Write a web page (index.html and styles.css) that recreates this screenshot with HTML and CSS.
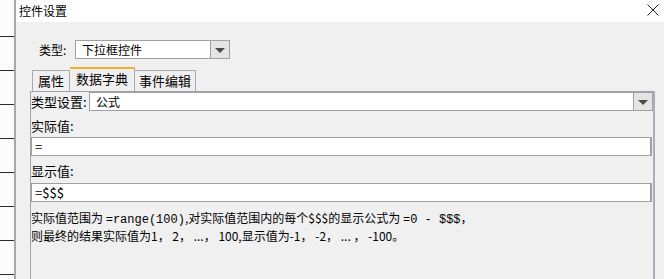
FILE: index.html
```html
<!DOCTYPE html>
<html lang="zh-CN">
<head>
    <meta charset="UTF-8">
    <title>控件设置</title>
    <link rel="stylesheet" href="styles.css">
</head>
<body>
    <div class="behind">
        <div class="line"></div>
        <div class="line"></div>
        <div class="line"></div>
        <div class="line"></div>
        <div class="line"></div>
        <div class="line"></div>
        <div class="line"></div>
        <div class="line"></div>
    </div>
    <div class="dialog">
        <div class="titlebar">
            <span class="title">控件设置</span>
            <svg class="close" width="12" height="12" viewBox="0 0 12 12">
                <path d="M0.5 0.5 L11.5 11.5 M11.5 0.5 L0.5 11.5" stroke="#222" stroke-width="1" fill="none"/>
            </svg>
        </div>
        <div class="content">
            <div class="type-row">
                <span class="lbl">类型:</span>
                <div class="combo small">
                    <span class="value">下拉框控件</span>
                    <span class="arrow"><i></i></span>
                </div>
            </div>
            <div class="tabs">
                <div class="tab t1">属性</div>
                <div class="tab t2 active">数据字典</div>
                <div class="tab t3">事件编辑</div>
            </div>
            <div class="panel">
                <div class="set-row">
                    <span class="lbl">类型设置:</span>
                    <div class="combo wide">
                        <span class="value">公式</span>
                        <span class="arrow"><i></i></span>
                    </div>
                </div>
                <div class="field-label">实际值:</div>
                <div class="field">=</div>
                <div class="field-label">显示值:</div>
                <div class="field">=$$$</div>
                <p class="note">实际值范围为 <span class="mono">=range(100)</span>,对实际值范围内的每个$$$的显示公式为 <span class="mono">=0 - $$$</span>，<br>则最终的结果实际值为1， 2， ...， 100,显示值为-1， -2， ... ， -100。</p>
            </div>
        </div>
    </div>
</body>
</html>
```

FILE: styles.css
```css
body {
    margin: 0;
    padding: 0;
    display: flex;
    width: 664px;
    height: 279px;
    overflow: hidden;
    font-family: "Noto Sans CJK SC", "DejaVu Sans", sans-serif;
    font-size: 12px;
    color: #000000;
    background: #ffffff;
}

.behind {
    width: 14px;
    flex: none;
    background: #fbfbfb;
    border-right: 2px solid #a8a8a8;
    padding-top: 36px;
}

.line {
    height: 1px;
    background: #2a2a2a;
    margin-bottom: 33px;
}

.dialog {
    flex: 1;
    display: flex;
    flex-direction: column;
    background: #f0f0f0;
}

.titlebar {
    height: 22px;
    background: #ffffff;
    display: flex;
    align-items: center;
    justify-content: space-between;
    padding: 0 4px 0 3px;
}

.title {
    font-size: 12px;
    line-height: 22px;
}

.close {
    margin-right: 1px;
    margin-top: -2px;
}

.content {
    padding: 18px 9px 0 14px;
    flex: 1;
    display: flex;
    flex-direction: column;
}

.type-row {
    display: flex;
    align-items: center;
    height: 19px;
    padding-left: 9px;
}

.type-row .lbl {
    width: 36px;
}

.combo {
    display: flex;
    height: 17px;
    border: 1px solid #a0a0a0;
    background: #ffffff;
}

.combo.small {
    width: 153px;
}

.combo.wide {
    flex: 1;
}

.combo .value {
    flex: 1;
    padding-left: 6px;
    line-height: 17px;
}

.arrow {
    width: 18px;
    border-left: 1px solid #a0a0a0;
    background: #e4e4e4;
    display: flex;
    align-items: center;
    justify-content: center;
}

.arrow i {
    width: 0;
    height: 0;
    border-left: 5px solid transparent;
    border-right: 5px solid transparent;
    border-top: 5px solid #4a4a4a;
    margin-top: 1px;
}

.tabs {
    display: flex;
    align-items: flex-end;
    margin-top: 8px;
    padding-left: 2px;
    height: 24px;
}

.tab {
    box-sizing: border-box;
    height: 21px;
    line-height: 20px;
    text-align: center;
    border: 1px solid #a6aab2;
    border-bottom: none;
    background: #f0f0f0;
    font-size: 13px;
    white-space: nowrap;
}

.t1 {
    width: 38px;
}

.t2 {
    width: 65px;
}

.t3 {
    width: 61px;
    border-left: none;
}

.tab.active {
    height: 24px;
    border-top: 2px solid #f0b030;
    line-height: 20px;
    border-left: none;
}

.panel {
    flex: 1;
    border-top: 1px solid #9ea3ac;
    border-left: 1px solid #9ea3ac;
    border-right: 2px solid #a8b0bf;
}

.set-row {
    display: flex;
    align-items: center;
    height: 19px;
}

.set-row .lbl {
    width: 58px;
    font-size: 13px;
}

.field-label {
    height: 26px;
    line-height: 30px;
    font-size: 13px;
}

.field {
    height: 17px;
    line-height: 17px;
    border: 1px solid #a0a0a0;
    border-right-width: 2px;
    background: #ffffff;
    padding-left: 3px;
    margin-right: 1px;
    font-size: 13px;
}

.field + .field-label {
    height: 27px;
}

.note {
    margin: 8px 0 0 0;
    line-height: 16px;
    font-size: 12px;
}

.mono {
    font-family: "Liberation Mono", monospace;
    font-size: 12px;
}
```
